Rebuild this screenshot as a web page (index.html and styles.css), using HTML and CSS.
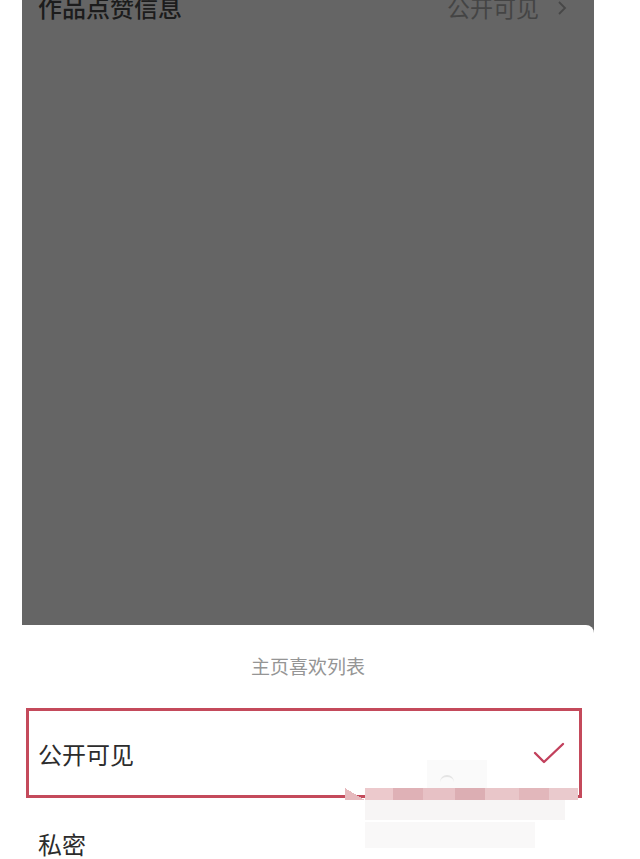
FILE: index.html
```html
<!DOCTYPE html>
<html lang="zh-CN">
<head>
<meta charset="utf-8">
<title>主页喜欢列表</title>
<link rel="stylesheet" href="styles.css">
</head>
<body>
<div class="screen">
  <div class="dim">
    <div class="setting-row">
      <span class="setting-name">作品点赞信息</span>
      <span class="setting-value">公开可见
        <svg class="chev" width="10" height="16" viewBox="0 0 10 16"><polyline points="2,2 8,8 2,14" fill="none" stroke="#474747" stroke-width="1.8"/></svg>
      </span>
    </div>
  </div>
  <div class="sheet">
    <div class="sheet-title">主页喜欢列表</div>
    <div class="option option-selected">
      <span class="option-label">公开可见</span>
      <svg class="check" width="32" height="24" viewBox="0 0 32 24"><polyline points="2,12 11,21 30,3" fill="none" stroke="#c2405c" stroke-width="2.4" stroke-linecap="round" stroke-linejoin="round"/></svg>
    </div>
    <div class="option option-plain">
      <span class="option-label">私密</span>
    </div>
    <div class="watermark">
      <div class="wm-top"></div>
      <div class="wm-arc"></div>
      <div class="wm-strip">
        <span class="s1"></span><span class="s2"></span><span class="s3"></span><span class="s4"></span><span class="s5"></span><span class="s6"></span><span class="s7"></span><span class="s8"></span>
      </div>
      <div class="wm-low1"></div>
      <div class="wm-low2"></div>
    </div>
  </div>
</div>
</body>
</html>
```
FILE: styles.css
```css
html, body {
  margin: 0;
  padding: 0;
  background: #ffffff;
}
body {
  font-family: "Noto Sans CJK SC", "Noto Sans", sans-serif;
  width: 640px;
  height: 859px;
  overflow: hidden;
}
.screen {
  width: 572px;
  margin-left: 22px;
  position: relative;
}
.dim {
  height: 633px;
  background: #656565;
  overflow: hidden;
}
.setting-row {
  display: flex;
  justify-content: space-between;
  align-items: center;
  margin-top: -5px;
  height: 24px;
  padding: 0 27px 0 16px;
  font-size: 24px;
  line-height: 24px;
}
.setting-name {
  color: #1c1c1c;
  font-weight: 500;
}
.setting-value {
  color: #444444;
  font-size: 23px;
  display: flex;
  align-items: center;
  gap: 18px;
}
.chev {
  margin-top: 2px;
}
.sheet {
  position: relative;
  margin-top: -8px;
  background: #ffffff;
  border-top-right-radius: 8px;
  height: 234px;
}
.sheet-title {
  height: 83px;
  line-height: 82px;
  text-align: center;
  font-size: 19px;
  color: #959595;
}
.option {
  box-sizing: border-box;
  height: 90px;
  display: flex;
  align-items: center;
  justify-content: space-between;
}
.option-label {
  font-size: 24px;
  color: #2c2c2c;
}
.option-selected {
  width: 556px;
  margin-left: 4px;
  border: 3px solid #c44a5b;
  padding: 0 14px 0 9px;
}
.option-plain {
  padding-left: 16px;
}
.watermark {
  position: absolute;
  left: 0;
  top: 0;
  width: 572px;
  height: 234px;
  pointer-events: none;
}
.wm-top {
  position: absolute;
  left: 405px;
  top: 135px;
  width: 60px;
  height: 30px;
  background: rgba(240, 240, 240, 0.3);
}
.wm-arc {
  position: absolute;
  left: 418px;
  top: 150px;
  width: 14px;
  height: 6px;
  border-top: 2px solid rgba(205, 205, 205, 0.5);
  border-radius: 8px 8px 0 0;
}
.wm-strip {
  position: absolute;
  left: 323px;
  top: 163px;
  height: 12px;
  display: flex;
}
.wm-strip span {
  display: block;
  height: 12px;
}
.wm-strip .s1 { width: 20px; background: linear-gradient(to top right, #e6b9bd 50%, rgba(255,255,255,0) 50%); }
.wm-strip .s2 { width: 28px; background: #ecc9cc; }
.wm-strip .s3 { width: 30px; background: #dfb1b6; }
.wm-strip .s4 { width: 32px; background: #e7c1c5; }
.wm-strip .s5 { width: 30px; background: #dcaeb3; }
.wm-strip .s6 { width: 34px; background: #e9c6c9; }
.wm-strip .s7 { width: 30px; background: #e2b7bb; }
.wm-strip .s8 { width: 29px; background: #eacacd; }
.wm-low1 {
  position: absolute;
  left: 343px;
  top: 175px;
  width: 200px;
  height: 20px;
  background: rgba(238, 232, 233, 0.45);
}
.wm-low2 {
  position: absolute;
  left: 343px;
  top: 197px;
  width: 170px;
  height: 26px;
  background: rgba(242, 240, 240, 0.45);
}
```
